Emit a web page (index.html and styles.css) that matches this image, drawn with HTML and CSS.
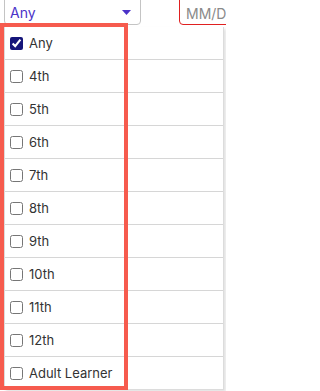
FILE: index.html
```html
<!DOCTYPE html>
<html>
<head>
<meta charset="utf-8">
<link rel="stylesheet" href="styles.css">
</head>
<body>
<div class="page">
  <div class="toolbar">
    <div class="select">
      <span class="select-value">Any</span>
      <svg class="caret" width="9" height="5" viewBox="0 0 9 5"><path d="M0 0H9L4.5 5Z" fill="#4b32c8"/></svg>
    </div>
    <div class="date">MM/DD/YYYY</div>
  </div>
  <div class="panel">
    <label class="row"><input type="checkbox" checked><span>Any</span></label>
    <label class="row"><input type="checkbox"><span>4th</span></label>
    <label class="row"><input type="checkbox"><span>5th</span></label>
    <label class="row"><input type="checkbox"><span>6th</span></label>
    <label class="row"><input type="checkbox"><span>7th</span></label>
    <label class="row"><input type="checkbox"><span>8th</span></label>
    <label class="row"><input type="checkbox"><span>9th</span></label>
    <label class="row"><input type="checkbox"><span>10th</span></label>
    <label class="row"><input type="checkbox"><span>11th</span></label>
    <label class="row"><input type="checkbox"><span>12th</span></label>
    <label class="row"><input type="checkbox"><span>Adult Learner</span></label>
  </div>
  <div class="highlight"></div>
</div>
</body>
</html>
```

FILE: styles.css
```css
html, body {
  margin: 0;
  padding: 0;
  background: #fff;
  overflow: hidden;
}
.page {
  position: relative;
  width: 226px;
  height: 391px;
  overflow: hidden;
  font-family: Inter, "Noto Sans", sans-serif;
  font-size: 13px;
  color: #333;
}
.toolbar {
  display: flex;
  align-items: flex-end;
  height: 25px;
  padding-left: 4px;
}
.select {
  flex-shrink: 0;
  box-sizing: border-box;
  width: 137px;
  height: 31px;
  border: 1px solid #c4c4c4;
  border-radius: 4px;
  display: flex;
  align-items: center;
  justify-content: space-between;
  padding: 6px 9px 0 5px;
}
.select-value {
  color: #4b32c8;
  font-size: 14px;
}
.caret {
  display: block;
}
.date {
  flex-shrink: 0;
  box-sizing: border-box;
  margin-left: 38px;
  width: 80px;
  height: 30px;
  border: 1px solid #e02020;
  border-radius: 4px;
  padding: 9px 0 0 6px;
  color: #8a8a8a;
  font-size: 14px;
  white-space: nowrap;
  overflow: hidden;
}
.panel {
  margin: 2px 0 0 4px;
  width: 218px;
  background: #fff;
  border: 1px solid #dcdcdc;
  border-top: 0;
  box-shadow: 2px 2px 3px rgba(0,0,0,0.12);
}
.row {
  box-sizing: border-box;
  height: 33px;
  display: flex;
  align-items: center;
  padding-left: 1px;
  border-bottom: 1px solid #d6d6d6;
}
.row:last-child {
  border-bottom: 0;
  height: 32px;
}
.row input {
  width: 13px;
  height: 13px;
  margin: 0 3px 0 4px;
  accent-color: #15157a;
}
.row span {
  margin-left: 3px;
}
.highlight {
  position: absolute;
  left: 0;
  top: 23px;
  width: 128px;
  height: 367px;
  box-sizing: border-box;
  border: 4px solid #f65b4e;
}
```
